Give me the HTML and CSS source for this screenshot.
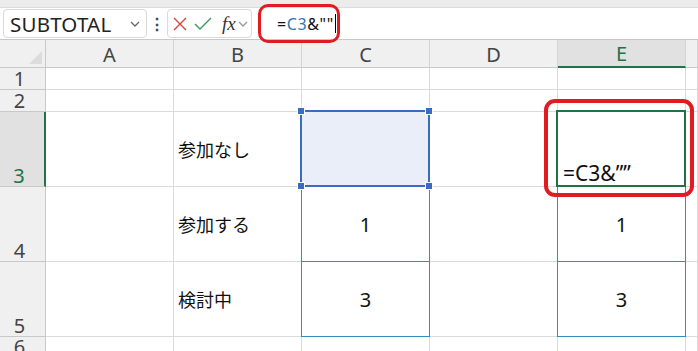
FILE: index.html
```html
<!DOCTYPE html>
<html lang="ja">
  <head>
    <meta charset="UTF-8" />
    <title>Excel</title>
    <link rel="stylesheet" href="styles.css">
  </head>
  <body>
    <div class="top-strip"></div>
    <div class="formula-bar">
      <div class="name-box">
        <span class="name-text">SUBTOTAL</span>
        <svg class="chev" width="12" height="8" viewBox="0 0 12 8"><path d="M2 2l4 4 4-4" fill="none" stroke="#666" stroke-width="1.3"/></svg>
      </div>
      <div class="dots">&#8942;</div>
      <div class="fn-box">
        <svg width="14" height="14" viewBox="0 0 14 14"><path d="M1 1l12 12M13 1L1 13" stroke="#d6453d" stroke-width="1.4"/></svg>
        <svg width="18" height="14" viewBox="0 0 18 14"><path d="M1 7l5 5L17 1" fill="none" stroke="#3a9a5c" stroke-width="1.4"/></svg>
        <span class="fx">fx</span>
        <svg class="chev" width="12" height="8" viewBox="0 0 12 8"><path d="M2 2l4 4 4-4" fill="none" stroke="#999" stroke-width="1.3"/></svg>
      </div>
      <div class="formula-input">
        <span class="formula-text">=<span class="ref-blue">C3</span>&amp;""</span>
        <span class="caret"></span>
        <div class="red-mark formula-mark"></div>
      </div>
    </div>

    <div class="sheet">
      <div class="hd corner"><span class="tri"></span></div>
      <div class="hd col">A</div>
      <div class="hd col">B</div>
      <div class="hd col">C</div>
      <div class="hd col">D</div>
      <div class="hd col active-col">E</div>
      <div class="hd col"></div>

      <div class="hd row">1</div>
      <div class="c"></div><div class="c"></div><div class="c"></div><div class="c"></div><div class="c"></div><div class="c"></div>

      <div class="hd row">2</div>
      <div class="c"></div><div class="c"></div><div class="c"></div><div class="c"></div><div class="c"></div><div class="c"></div>

      <div class="hd row active-row">3</div>
      <div class="c"></div>
      <div class="c label">参加なし</div>
      <div class="c"><div class="sel"><i class="h tl"></i><i class="h tr"></i><i class="h bl"></i><i class="h br"></i></div></div>
      <div class="c"></div>
      <div class="c editing"><div class="edit-box">=C3&amp;””</div><div class="red-mark cell-mark"></div></div>
      <div class="c"></div>

      <div class="hd row">4</div>
      <div class="c"></div>
      <div class="c label">参加する</div>
      <div class="c num"><div class="trace"></div>1</div>
      <div class="c"></div>
      <div class="c num"><div class="trace"></div>1</div>
      <div class="c"></div>

      <div class="hd row">5</div>
      <div class="c"></div>
      <div class="c label">検討中</div>
      <div class="c num"><div class="trace"></div>3</div>
      <div class="c"></div>
      <div class="c num"><div class="trace"></div>3</div>
      <div class="c"></div>

      <div class="hd row">6</div>
      <div class="c"></div><div class="c"></div><div class="c"></div><div class="c"></div><div class="c"></div><div class="c"></div>
    </div>
  </body>
</html>
```

FILE: styles.css
```css
body {
  margin: 0;
  width: 698px;
  height: 351px;
  overflow: hidden;
  background: #fff;
  font-family: "Noto Sans", "Noto Sans CJK JP", sans-serif;
  color: #222;
}

.top-strip {
  height: 7px;
  background: #ececec;
  border-bottom: 1px solid #dcdcdc;
}

.formula-bar {
  height: 31px;
  display: flex;
  align-items: center;
  background: #fff;
  border-bottom: 1px solid #c8c8c8;
  padding-left: 3px;
}

.name-box {
  width: 144px;
  height: 29px;
  box-sizing: border-box;
  border: 1px solid #dadada;
  border-radius: 4px;
  display: flex;
  align-items: center;
  justify-content: space-between;
  padding: 0 5px 0 6px;
}

.name-text {
  font-size: 20.5px;
  color: #222;
  letter-spacing: 0.2px;
}

.dots {
  width: 20px;
  text-align: center;
  font-size: 16px;
  font-weight: bold;
  color: #444;
}

.fn-box {
  width: 85px;
  height: 29px;
  box-sizing: border-box;
  border: 1px solid #dadada;
  border-radius: 4px;
  display: flex;
  align-items: center;
  gap: 7px;
  padding-left: 5px;
}

.fx {
  font-family: "Liberation Serif", serif;
  font-style: italic;
  font-size: 19px;
  color: #333;
  margin-left: 3px;
  margin-right: -6px;
}

.formula-input {
  position: relative;
  flex: 1;
  height: 100%;
  display: flex;
  align-items: center;
  padding-left: 19px;
  margin-left: 6px;
}

.formula-text {
  font-size: 16px;
  color: #111;
  letter-spacing: 0.6px;
}

.ref-blue {
  color: #2f74b5;
}

.caret {
  width: 1px;
  height: 19px;
  background: #000;
  margin-left: 1px;
}

.red-mark {
  position: absolute;
  border: 4px solid #e11b22;
  border-radius: 11px;
  pointer-events: none;
}

.formula-mark {
  left: 0;
  top: -4px;
  width: 76px;
  height: 33px;
  border-width: 3px;
  border-radius: 10px;
}

.sheet {
  display: grid;
  grid-template-columns: 46px 128px 128px 128px 128px 128px 1fr;
  grid-template-rows: 28px 22px 22px 75px 75px 75px 1fr;
  height: 311px;
}

.hd {
  background: #f0f0f0;
  border-right: 1px solid #d4d4d4;
  border-bottom: 1px solid #c8c8c8;
  box-sizing: border-box;
  font-size: 20px;
  color: #444;
  display: flex;
  justify-content: center;
  line-height: 1;
}

.corner {
  position: relative;
  border-right-color: #c8c8c8;
}

.tri {
  position: absolute;
  right: 3px;
  bottom: 3px;
  width: 0;
  height: 0;
  border-left: 13px solid transparent;
  border-bottom: 13px solid #dcdcdc;
}

.col {
  align-items: flex-end;
  padding-bottom: 2px;
}

.row {
  align-items: flex-end;
  padding-bottom: 0;
  padding-right: 6px;
  border-right-color: #c8c8c8;
}

.active-col {
  background: #e1e1e1;
  color: #217346;
  border-bottom: 2px solid #217346;
}

.active-row {
  background: #e1e1e1;
  color: #217346;
  border-right: 2px solid #217346;
}

.c {
  position: relative;
  box-sizing: border-box;
  border-right: 1px solid #dadada;
  border-bottom: 1px solid #dadada;
  display: flex;
  align-items: center;
  font-size: 17px;
  color: #111;
}

.label {
  padding-left: 4px;
  font-family: "Noto Sans CJK JP", sans-serif;
  font-size: 18px;
}

.num {
  justify-content: center;
  font-size: 20px;
}

.sel {
  position: absolute;
  left: -2px;
  top: -2px;
  right: -1px;
  bottom: -1px;
  border: 2px solid #3b6bc0;
  background: #e9eef8;
  z-index: 2;
}

.h {
  position: absolute;
  width: 6px;
  height: 6px;
  background: #3b6bc0;
  border: 1px solid #fff;
}

.tl { left: -5px; top: -5px; }
.tr { right: -5px; top: -5px; }
.bl { left: -5px; bottom: -5px; }
.br { right: -5px; bottom: -5px; }

.trace {
  position: absolute;
  left: -1px;
  top: -1px;
  right: -1px;
  bottom: -1px;
  border: 1px solid #2f8fbf;
  z-index: 1;
}

.editing {
  z-index: 3;
  overflow: visible;
}

.edit-box {
  position: absolute;
  left: -2px;
  top: -2px;
  right: -1px;
  bottom: -1px;
  border: 2px solid #217346;
  background: #fff;
  display: flex;
  align-items: flex-end;
  padding-left: 5px;
  font-size: 21px;
  line-height: 1;
  padding-bottom: 1px;
  color: #111;
}

.cell-mark {
  left: -14px;
  top: -13px;
  right: -9px;
  bottom: -11px;
}
```
